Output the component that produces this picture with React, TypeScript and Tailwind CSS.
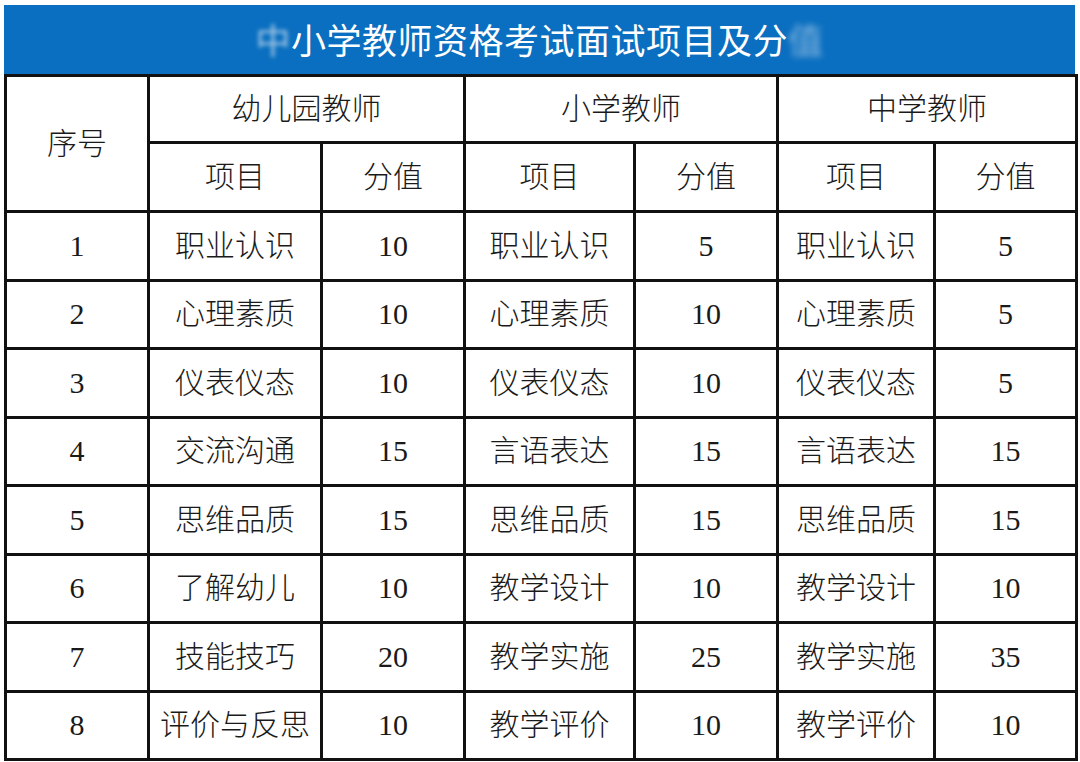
import React from 'react';

interface Row {
  no: number;
  k: [string, number];
  p: [string, number];
  m: [string, number];
}

const rows: Row[] = [
  { no: 1, k: ['职业认识', 10], p: ['职业认识', 5], m: ['职业认识', 5] },
  { no: 2, k: ['心理素质', 10], p: ['心理素质', 10], m: ['心理素质', 5] },
  { no: 3, k: ['仪表仪态', 10], p: ['仪表仪态', 10], m: ['仪表仪态', 5] },
  { no: 4, k: ['交流沟通', 15], p: ['言语表达', 15], m: ['言语表达', 15] },
  { no: 5, k: ['思维品质', 15], p: ['思维品质', 15], m: ['思维品质', 15] },
  { no: 6, k: ['了解幼儿', 10], p: ['教学设计', 10], m: ['教学设计', 10] },
  { no: 7, k: ['技能技巧', 20], p: ['教学实施', 25], m: ['教学实施', 35] },
  { no: 8, k: ['评价与反思', 10], p: ['教学评价', 10], m: ['教学评价', 10] },
];

const cell = 'border-[3px] border-[#111] text-center align-middle p-0 font-light';
const serif = { fontFamily: '"Liberation Serif", "Noto Sans CJK SC", serif' };

const App = () => {
  return (
    <div className="w-[1080px] h-[762px] bg-white overflow-hidden pt-[5px] pl-[4px]">
      <div className="w-[1071px]">
        {/* Title bar */}
        <div
          className="h-[69px] bg-[#0a6fc0] flex items-center justify-center text-white text-[35px] tracking-[0.5px]"
          style={{ fontFamily: '"Noto Sans CJK SC", sans-serif' }}
        >
          <span className="blur-[2px] opacity-70 text-[#dfeaf5]">中</span>
          <span>小学教师资格考试面试项目及分</span>
          <span className="blur-[3px] opacity-60 text-[#dfeaf5]">值</span>
        </div>

        {/* Table */}
        <table className="w-[1071px] table-fixed border-collapse text-[#1a1a1a] text-[30px] leading-none" style={serif}>
          <colgroup>
            <col className="w-[143px]" />
            <col className="w-[173px]" />
            <col className="w-[143px]" />
            <col className="w-[170px]" />
            <col className="w-[143px]" />
            <col className="w-[157px]" />
            <col className="w-[142px]" />
          </colgroup>
          <thead>
            <tr className="h-[67px]">
              <th rowSpan={2} className={cell}>序号</th>
              <th colSpan={2} className={cell}>幼儿园教师</th>
              <th colSpan={2} className={cell}>小学教师</th>
              <th colSpan={2} className={cell}>中学教师</th>
            </tr>
            <tr className="h-[69px]">
              <th className={cell}>项目</th>
              <th className={cell}>分值</th>
              <th className={cell}>项目</th>
              <th className={cell}>分值</th>
              <th className={cell}>项目</th>
              <th className={cell}>分值</th>
            </tr>
          </thead>
          <tbody>
            {rows.map((r) => (
              <tr key={r.no} className="h-[68.5px]">
                <td className={cell}>{r.no}</td>
                <td className={cell}>{r.k[0]}</td>
                <td className={cell}>{r.k[1]}</td>
                <td className={cell}>{r.p[0]}</td>
                <td className={cell}>{r.p[1]}</td>
                <td className={cell}>{r.m[0]}</td>
                <td className={cell}>{r.m[1]}</td>
              </tr>
            ))}
          </tbody>
        </table>
      </div>
    </div>
  );
};

export default App;
